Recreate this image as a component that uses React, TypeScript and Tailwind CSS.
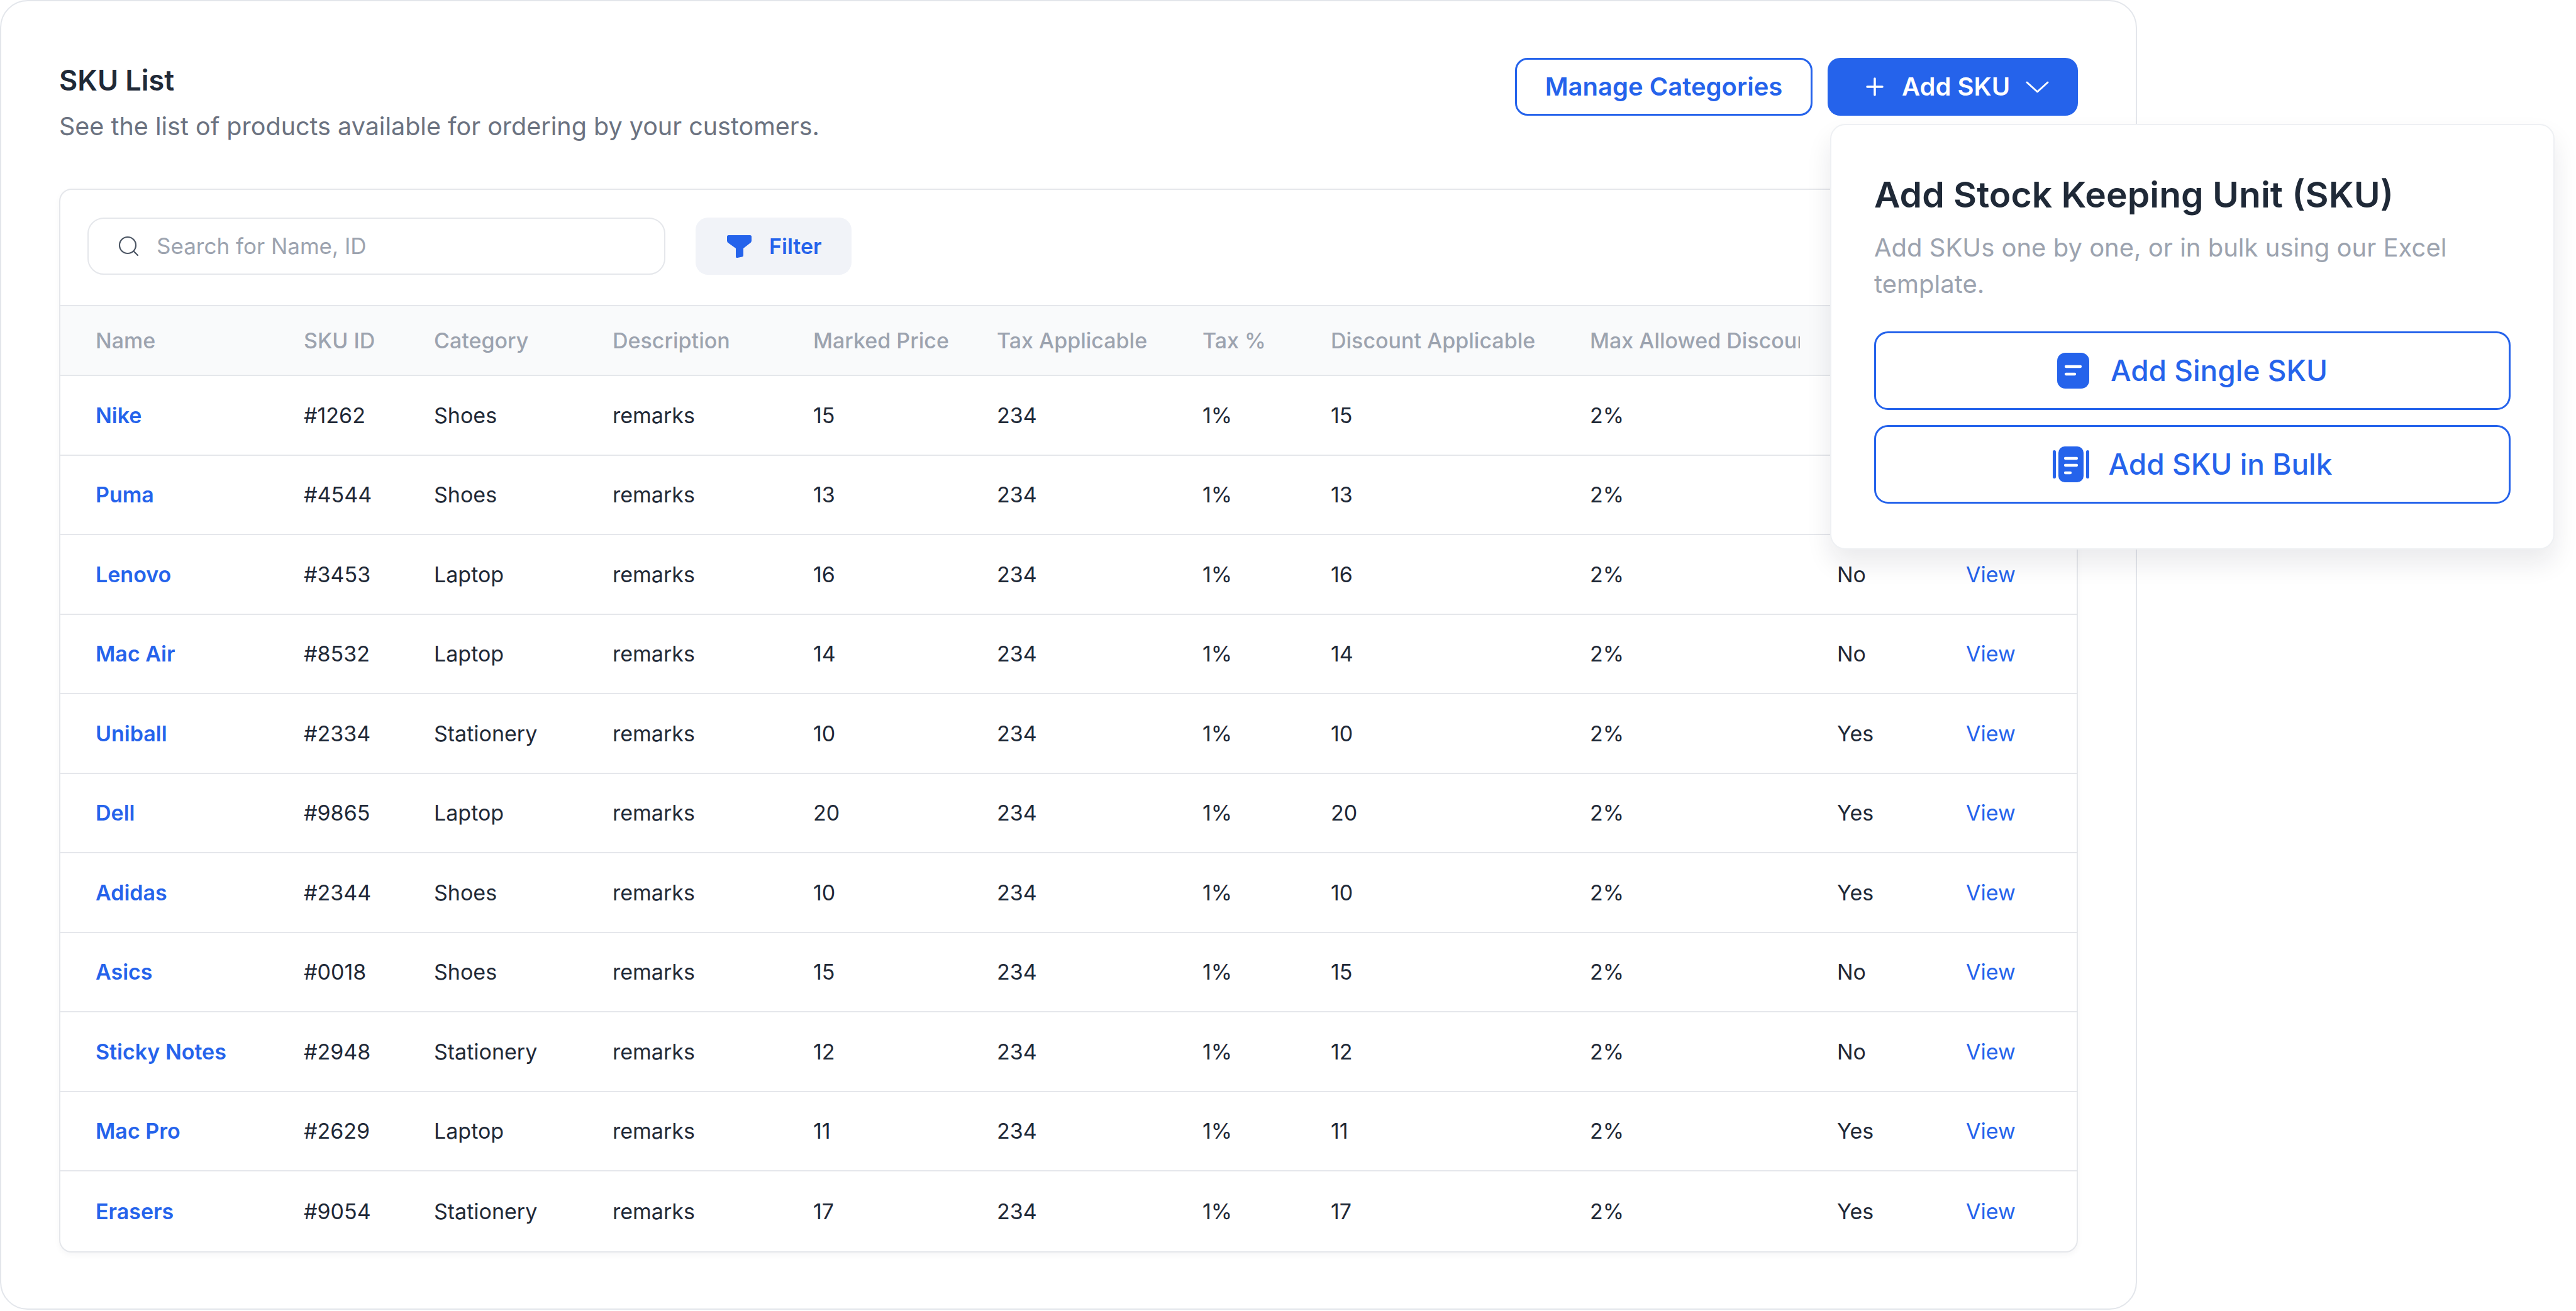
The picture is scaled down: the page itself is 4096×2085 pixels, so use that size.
type Row = [string, string, string, string, string];

const rows: Row[] = [
  ['Nike', '#1262', 'Shoes', '15', 'Yes'],
  ['Puma', '#4544', 'Shoes', '13', 'No'],
  ['Lenovo', '#3453', 'Laptop', '16', 'No'],
  ['Mac Air', '#8532', 'Laptop', '14', 'No'],
  ['Uniball', '#2334', 'Stationery', '10', 'Yes'],
  ['Dell', '#9865', 'Laptop', '20', 'Yes'],
  ['Adidas', '#2344', 'Shoes', '10', 'Yes'],
  ['Asics', '#0018', 'Shoes', '15', 'No'],
  ['Sticky Notes', '#2948', 'Stationery', '12', 'No'],
  ['Mac Pro', '#2629', 'Laptop', '11', 'Yes'],
  ['Erasers', '#9054', 'Stationery', '17', 'Yes'],
];

const gridCols =
  'grid grid-cols-[387px_207px_284px_319px_292px_327px_204px_412px_393px_205px_1fr] items-center';

function SearchIcon() {
  return (
    <svg width="34" height="34" viewBox="0 0 34 34" fill="none">
      <circle cx="15" cy="15" r="13" stroke="#4b5563" strokeWidth="2.2" />
      <path d="M24.5 24.5L31 31" stroke="#4b5563" strokeWidth="2.2" strokeLinecap="round" />
    </svg>
  );
}

function FilterIcon() {
  return (
    <svg width="39" height="36" viewBox="0 0 39 36" fill="none">
      <path
        d="M2.5 0H36.5Q39 0 39 2.5V8.5Q39 10.8 37.2 12.2L26 21V32Q26 34 24 34.5L16.5 36Q14 36.5 14 34V21L1.8 12.2Q0 10.8 0 8.5V2.5Q0 0 2.5 0Z"
        fill="#2563eb"
      />
    </svg>
  );
}

function PlusIcon() {
  return (
    <svg width="28" height="30" viewBox="0 0 28 30" fill="none">
      <path d="M14 2V28M2 15H26" stroke="white" strokeWidth="3.5" strokeLinecap="round" />
    </svg>
  );
}

function ChevronIcon() {
  return (
    <svg width="37" height="19" viewBox="0 0 37 19" fill="none">
      <path d="M2 2L18.5 17L35 2" stroke="white" strokeWidth="3" strokeLinecap="round" strokeLinejoin="round" />
    </svg>
  );
}

function SingleIcon() {
  return (
    <svg width="51" height="57" viewBox="0 0 51 57" fill="none">
      <rect x="0" y="0" width="51" height="57" rx="13" fill="#2563eb" />
      <path d="M14 22H37M14 34H28" stroke="white" strokeWidth="4.3" strokeLinecap="round" />
    </svg>
  );
}

function BulkIcon() {
  return (
    <svg width="58" height="57" viewBox="0 0 58 57" fill="none">
      <rect x="0" y="6" width="5" height="45" rx="2.5" fill="#2563eb" />
      <rect x="53" y="6" width="5" height="45" rx="2.5" fill="#2563eb" />
      <rect x="9" y="0" width="40" height="57" rx="10" fill="#2563eb" />
      <path d="M20 19H38M20 30H38M20 42H28" stroke="white" strokeWidth="4.3" strokeLinecap="round" />
    </svg>
  );
}

export default function App() {
  return (
    <div className="relative h-[2085px] w-[4096px] bg-white font-['Inter',sans-serif]">
      <div className="w-[3398px] rounded-[44px] border-2 border-[#e3e6eb] bg-white px-[92px] pt-[90px] pb-[89px]">
        <div className="flex items-start justify-between">
          <div>
            <h1 className="mt-[9px] text-[45px] font-semibold leading-[54px] text-[#1f2937]">SKU List</h1>
            <p className="mt-[22px] text-[39.5px] leading-[48px] text-[#6b7280]">
              See the list of products available for ordering by your customers.
            </p>
          </div>
          <div className="flex gap-[24px]">
            <button className="flex h-[92px] w-[473px] items-center justify-center rounded-[20px] border-[3px] border-[#2563eb] bg-white text-[40px] font-semibold text-[#2563eb]">
              Manage Categories
            </button>
            <button className="flex h-[92px] w-[398px] items-center rounded-[20px] bg-[#2563eb] pl-[61px] text-[40px] font-semibold text-white">
              <PlusIcon />
              <span className="ml-[29px]">Add SKU</span>
              <span className="ml-[25px] flex items-center">
                <ChevronIcon />
              </span>
            </button>
          </div>
        </div>

        <div className="mt-[75px] overflow-hidden rounded-[20px] border-2 border-[#e5e7eb] bg-white shadow-[0_4px_10px_rgba(17,24,39,0.04)]">
          <div className="flex items-center gap-[48px] pl-[43px] pt-[44px] pb-[48px]">
            <div className="flex h-[91px] w-[919px] items-center rounded-[26px] border-2 border-[#e5e7eb] bg-white pl-[47px]">
              <SearchIcon />
              <span className="ml-[27px] text-[35px] text-[#9ca3af]">Search for Name, ID</span>
            </div>
            <button className="flex h-[91px] w-[248px] items-center rounded-[20px] bg-[#f1f3f8] pl-[50px] text-[34px] font-semibold text-[#2563eb]">
              <FilterIcon />
              <span className="ml-[28px]">Filter</span>
            </button>
          </div>

          <div
            className={`${gridCols} h-[113px] border-y-2 border-[#e5e7eb] bg-[#f9fafb] text-[34px] font-medium text-[#9ca3af]`}
          >
            <div className="pl-[56px]">Name</div>
            <div>SKU ID</div>
            <div>Category</div>
            <div>Description</div>
            <div>Marked Price</div>
            <div>Tax Applicable</div>
            <div>Tax %</div>
            <div>Discount Applicable</div>
            <div className="w-[334px] overflow-hidden whitespace-nowrap">Max Allowed Discount</div>
            <div>Status</div>
            <div>Action</div>
          </div>

          {rows.map((r, i) => (
            <div
              key={r[1]}
              className={`${gridCols} h-[126.5px] text-[34px] text-[#1f2937] ${
                i < rows.length - 1 ? 'border-b-2 border-[#e5e7eb]' : ''
              }`}
            >
              <div className="pl-[56px] font-semibold text-[#2563eb]">{r[0]}</div>
              <div>{r[1]}</div>
              <div>{r[2]}</div>
              <div>remarks</div>
              <div>{r[3]}</div>
              <div>234</div>
              <div>1%</div>
              <div>{r[3]}</div>
              <div>2%</div>
              <div>{r[4]}</div>
              <div className="text-[#2563eb]">View</div>
            </div>
          ))}
        </div>
      </div>

      <div className="absolute left-[2910px] top-[197px] h-[677px] w-[1152px] rounded-[24px] border-2 border-[#eef0f3] bg-white px-[68px] pt-[77px] shadow-[0_22px_40px_rgba(17,24,39,0.09)]">
        <h2 className="text-[57px] font-semibold leading-[68px] text-[#1f2937]">Add Stock Keeping Unit (SKU)</h2>
        <p className="mt-[21px] max-w-[940px] text-[40px] leading-[58px] text-[#9ca3af]">
          Add SKUs one by one, or in bulk using our Excel template.
        </p>
        <div className="mt-[46px] flex flex-col gap-[24px]">
          <button className="flex h-[125px] w-full items-center justify-center rounded-[22px] border-[3px] border-[#2563eb] bg-white text-[46px] font-medium text-[#2563eb]">
            <SingleIcon />
            <span className="ml-[34px]">Add Single SKU</span>
          </button>
          <button className="flex h-[125px] w-full items-center justify-center rounded-[22px] border-[3px] border-[#2563eb] bg-white text-[46px] font-medium text-[#2563eb]">
            <BulkIcon />
            <span className="ml-[31px]">Add SKU in Bulk</span>
          </button>
        </div>
      </div>
    </div>
  );
}
